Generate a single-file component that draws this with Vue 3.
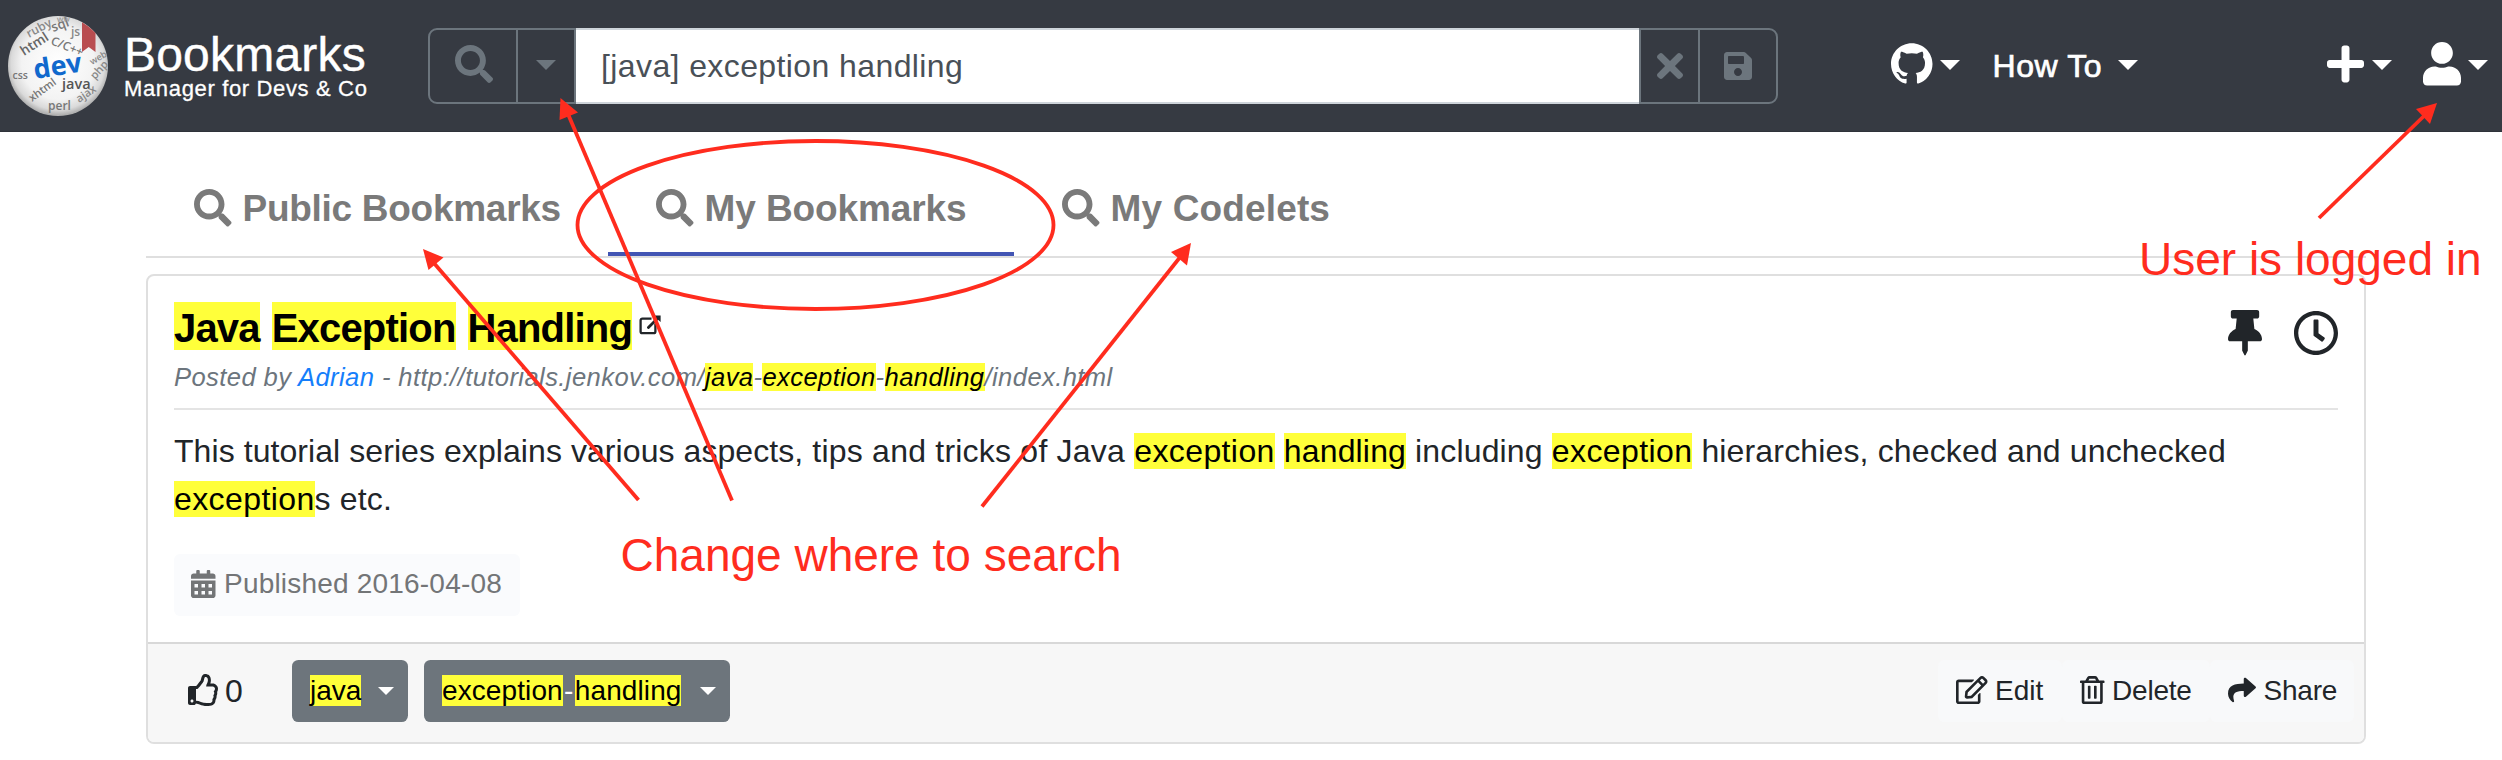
<script setup>
const icons = {
  search: {
    box: '0 0 512 512',
    d: 'M505 442.7L405.3 343c-4.5-4.5-10.6-7-17-7H372c27.6-35.3 44-79.7 44-128C416 93.1 322.9 0 208 0S0 93.1 0 208s93.1 208 208 208c48.3 0 92.7-16.4 128-44v16.3c0 6.4 2.5 12.5 7 17l99.7 99.7c9.4 9.4 24.6 9.4 33.9 0l28.3-28.3c9.4-9.4 9.4-24.6.1-34zM208 336c-70.7 0-128-57.2-128-128 0-70.7 57.2-128 128-128 70.7 0 128 57.2 128 128 0 70.7-57.2 128-128 128z'
  },
  times: {
    box: '0 80 352 352',
    d: 'M242.72 256l100.07-100.07c12.28-12.28 12.28-32.19 0-44.48l-22.24-22.24c-12.28-12.28-32.19-12.28-44.48 0L176 189.28 75.93 89.21c-12.28-12.28-32.19-12.28-44.48 0L9.21 111.45c-12.28 12.28-12.28 32.19 0 44.48L109.28 256 9.21 356.07c-12.28 12.28-12.28 32.19 0 44.48l22.24 22.24c12.28 12.28 32.2 12.28 44.48 0L176 322.72l100.07 100.07c12.28 12.28 32.2 12.28 44.48 0l22.24-22.24c12.28-12.28 12.28-32.19 0-44.48L242.72 256z'
  },
  save: {
    box: '0 32 448 448',
    d: 'M433.941 129.941l-83.882-83.882A48 48 0 0 0 316.118 32H48C21.49 32 0 53.49 0 80v352c0 26.51 21.49 48 48 48h352c26.51 0 48-21.49 48-48V163.882a48 48 0 0 0-14.059-33.941zM224 416c-35.346 0-64-28.654-64-64 0-35.346 28.654-64 64-64s64 28.654 64 64c0 35.346-28.654 64-64 64zm96-304.52V212c0 6.627-5.373 12-12 12H76c-6.627 0-12-5.373-12-12V108c0-6.627 5.373-12 12-12h228.52c3.183 0 6.235 1.264 8.485 3.515l3.48 3.48A11.996 11.996 0 0 1 320 111.48z'
  },
  github: {
    box: '0 0 16 15.7',
    d: 'M8 0C3.58 0 0 3.58 0 8c0 3.54 2.29 6.53 5.47 7.59.4.07.55-.17.55-.38 0-.19-.01-.82-.01-1.49-2.01.37-2.53-.49-2.69-.94-.09-.23-.48-.94-.82-1.13-.28-.15-.68-.52-.01-.53.63-.01 1.08.58 1.23.82.72 1.21 1.87.87 2.33.66.07-.52.28-.87.51-1.07-1.78-.2-3.64-.89-3.64-3.95 0-.87.31-1.59.82-2.15-.08-.2-.36-1.02.08-2.12 0 0 .67-.21 2.2.82.64-.18 1.32-.27 2-.27.68 0 1.36.09 2 .27 1.53-1.04 2.2-.82 2.2-.82.44 1.1.16 1.92.08 2.12.51.56.82 1.27.82 2.15 0 3.07-1.87 3.75-3.65 3.95.29.25.54.73.54 1.48 0 1.07-.01 1.93-.01 2.2 0 .21.15.46.55.38A8.013 8.013 0 0016 8c0-4.42-3.58-8-8-8z'
  },
  plus: {
    box: '0 32 448 448',
    d: 'M416 208H272V64c0-17.67-14.33-32-32-32h-32c-17.67 0-32 14.33-32 32v144H32c-17.67 0-32 14.33-32 32v32c0 17.67 14.33 32 32 32h144v144c0 17.67 14.33 32 32 32h32c17.67 0 32-14.33 32-32V304h144c17.67 0 32-14.33 32-32v-32c0-17.67-14.33-32-32-32z'
  },
  user: {
    box: '0 0 448 512',
    d: 'M224 256c70.7 0 128-57.3 128-128S294.7 0 224 0 96 57.3 96 128s57.3 128 128 128zm89.6 32h-16.7c-22.2 10.2-46.9 16-72.9 16s-50.6-5.8-72.9-16h-16.7C60.2 288 0 348.2 0 422.4V464c0 26.5 21.5 48 48 48h352c26.5 0 48-21.5 48-48v-41.6c0-74.2-60.2-134.4-134.4-134.4z'
  },
  pin: {
    box: '0 0 384 512',
    d: 'M298.028 214.267L285.793 96H328c13.255 0 24-10.745 24-24V24c0-13.255-10.745-24-24-24H56C42.745 0 32 10.745 32 24v48c0 13.255 10.745 24 24 24h42.207L85.972 214.267C37.465 236.82 0 277.261 0 328c0 13.255 10.745 24 24 24h136v104.007c0 1.242.289 2.467.845 3.578l24 48c2.941 5.882 11.364 5.893 14.311 0l24-48a8.008 8.008 0 0 0 .845-3.578V352h136c13.255 0 24-10.745 24-24-.001-51.183-37.983-91.42-85.973-113.733z'
  },
  clock: {
    box: '8 8 496 496',
    d: 'M256 8C119 8 8 119 8 256s111 248 248 248 248-111 248-248S393 8 256 8zm0 448c-110.5 0-200-89.5-200-200S145.5 56 256 56s200 89.5 200 200-89.5 200-200 200zm61.8-104.4l-84.9-61.7c-3.1-2.3-4.9-5.9-4.9-9.7V116c0-6.6 5.4-12 12-12h32c6.6 0 12 5.4 12 12v141.7l66.8 48.6c5.4 3.9 6.5 11.4 2.6 16.8L334.6 349c-3.9 5.3-11.4 6.5-16.8 2.6z'
  },
  thumb: {
    box: '0 0 480 512',
    d: 'M466.27 286.69C475.04 271.84 480 256 480 236.85c0-44.015-37.218-85.58-85.82-85.58H357.7c4.92-12.81 8.85-28.13 8.85-46.54C366.55 31.936 328.86 0 271.28 0c-61.607 0-58.093 94.933-71.76 108.6-22.747 22.747-49.615 66.447-68.76 83.4H32c-17.673 0-32 14.327-32 32v240c0 17.673 14.327 32 32 32h64c14.893 0 27.408-10.174 30.978-23.95 44.509 1.001 75.06 39.94 177.802 39.94 7.22 0 15.22.01 22.22.01 77.117 0 111.986-39.423 112.94-95.33 13.319-18.425 20.299-43.122 17.34-66.99 9.854-18.452 13.664-40.343 8.99-62.99zm-61.75 53.83c12.56 21.13 1.26 49.41-13.94 57.57 7.7 48.78-17.608 65.9-53.12 65.9h-37.82c-71.639 0-118.029-37.82-171.64-37.82V240h10.92c28.36 0 67.98-70.89 94.54-97.46 28.36-28.36 18.91-75.63 37.82-94.54 47.27 0 47.27 32.98 47.27 56.73 0 39.17-28.36 56.72-28.36 94.54h103.99c21.11 0 37.73 18.91 37.82 37.82.09 18.9-12.82 37.81-22.27 37.81 13.489 14.555 16.371 45.236-5.21 65.62zM88 432c0 13.255-10.745 24-24 24s-24-10.745-24-24 10.745-24 24-24 24 10.745 24 24z'
  },
  edit: {
    box: '0 0 576 512',
    d: 'M402.3 344.9l32-32c5-5 13.7-1.5 13.7 5.7V464c0 26.5-21.5 48-48 48H48c-26.5 0-48-21.5-48-48V112c0-26.5 21.5-48 48-48h273.5c7.1 0 10.7 8.6 5.7 13.7l-32 32c-1.5 1.5-3.5 2.3-5.7 2.3H48v352h352V350.5c0-2.1.8-4.1 2.3-5.6zm156.6-201.8L296.3 405.7l-90.4 10c-26.2 2.9-48.5-19.2-45.6-45.6l10-90.4L432.9 17.1c22.9-22.9 59.9-22.9 82.7 0l43.2 43.2c22.9 22.9 22.9 60 .1 82.8zM460.1 174L402 115.9 216.2 301.8l-7.3 65.3 65.3-7.3L460.1 174zm64.8-79.7l-43.2-43.2c-4.1-4.1-10.8-4.1-14.8 0L436 82l58.1 58.1 30.9-30.9c4-4.2 4-10.8-.1-14.9z'
  },
  trash: {
    box: '0 0 448 512',
    d: 'M268 416h24a12 12 0 0 0 12-12V188a12 12 0 0 0-12-12h-24a12 12 0 0 0-12 12v216a12 12 0 0 0 12 12zM432 80h-82.41l-34-56.7A48 48 0 0 0 274.41 0H173.59a48 48 0 0 0-41.16 23.3L98.41 80H16A16 16 0 0 0 0 96v16a16 16 0 0 0 16 16h16v336a48 48 0 0 0 48 48h288a48 48 0 0 0 48-48V128h16a16 16 0 0 0 16-16V96a16 16 0 0 0-16-16zM171.84 50.91A6 6 0 0 1 177 48h94a6 6 0 0 1 5.15 2.91L293.61 80H154.39zM368 464H80V128h288zm-212-48h24a12 12 0 0 0 12-12V188a12 12 0 0 0-12-12h-24a12 12 0 0 0-12 12v216a12 12 0 0 0 12 12z'
  },
  share: {
    box: '0 0 512 512',
    d: 'M503.691 189.836L327.687 37.851C312.281 24.546 288 35.347 288 56.015v80.053C127.371 137.907 0 170.1 0 322.326c0 61.441 39.581 122.309 83.333 154.132 13.653 9.931 33.111-2.533 28.077-18.631C66.066 312.814 132.917 274.316 288 272.085V360c0 20.7 24.3 31.453 39.687 18.164l176.004-152c11.071-9.562 11.086-26.753 0-36.328z'
  }
}

const tabs = [
  { label: 'Public Bookmarks', kind: 'public', active: false },
  { label: 'My Bookmarks', kind: 'mine', active: true },
  { label: 'My Codelets', kind: 'codelets', active: false }
]

/* words scattered over the logo sphere: x, y, rotation, size, shade */
const logoWords = [
  { t: 'ruby', x: 21, y: 22, r: -28, s: 12, c: '#888' },
  { t: 'sql', x: 45, y: 16, r: -20, s: 13, c: '#777' },
  { t: 'ww', x: 49, y: 6, r: -2, s: 8, c: '#999' },
  { t: 'js', x: 63, y: 20, r: 0, s: 12, c: '#888' },
  { t: 'html', x: 16, y: 40, r: -33, s: 13.5, c: '#666' },
  { t: 'C/C++', x: 42, y: 28, r: 22, s: 12, c: '#777' },
  { t: 'css', x: 4.5, y: 63, r: 0, s: 10.5, c: '#777' },
  { t: 'web', x: 84, y: 49, r: -30, s: 9, c: '#888' },
  { t: 'php', x: 87, y: 64, r: -48, s: 11, c: '#888' },
  { t: 'java', x: 54, y: 73, r: 0, s: 14.5, c: '#555' },
  { t: 'xhtml', x: 24, y: 86, r: -36, s: 11, c: '#777' },
  { t: 'perl', x: 40, y: 94, r: 0, s: 12, c: '#777' },
  { t: 'ajax', x: 71, y: 87, r: -34, s: 11, c: '#888' }
]

const arrows = [
  { x1: 638.5, y1: 500, x2: 433, y2: 262, head: '423,249 443.5,257.5 428.5,270' },
  { x1: 732, y1: 500.5, x2: 568, y2: 114, head: '560.5,98 578,112.5 559.5,120' },
  { x1: 982, y1: 506.5, x2: 1181, y2: 256, head: '1191,243 1187,265.5 1171,252' },
  { x1: 2319, y1: 218, x2: 2425, y2: 115, head: '2437,103 2430,124 2416,109' }
]
</script>

<template>
  <div class="page">
    <header class="navbar">
      <a class="brand">
        <svg class="logo" viewBox="0 0 100 100">
          <defs>
            <radialGradient id="ball" cx="50%" cy="47%" r="52%">
              <stop offset="0" stop-color="#fff" />
              <stop offset="0.7" stop-color="#f3f3f3" />
              <stop offset="0.9" stop-color="#dadada" />
              <stop offset="1" stop-color="#b0b0b0" />
            </radialGradient>
          </defs>
          <circle cx="50" cy="50" r="50" fill="url(#ball)" />
          <text
            v-for="w in logoWords"
            :key="w.t"
            :transform="`translate(${w.x} ${w.y}) rotate(${w.r})`"
            :font-size="w.s"
            :fill="w.c"
            class="word"
          >{{ w.t }}</text>
          <path d="M74 6.200q7 3.900 13.500 10.800v19l-6.800-5-6.700 5z" fill="#b94d50" />
          <text transform="translate(27 63) rotate(-9)" class="dev">dev</text>
        </svg>
        <span class="brand-text">
          <span class="brand-name">Bookmarks</span>
          <span class="brand-sub">Manager for Devs &amp; Co</span>
        </span>
      </a>

      <div class="search">
        <button class="seg seg-search">
          <svg :viewBox="icons.search.box"><path :d="icons.search.d" /></svg>
        </button>
        <button class="seg seg-drop"><i class="caret"></i></button>
        <div class="field">[java] exception handling</div>
        <button class="seg seg-clear">
          <svg :viewBox="icons.times.box"><path :d="icons.times.d" /></svg>
        </button>
        <button class="seg seg-save">
          <svg :viewBox="icons.save.box"><path :d="icons.save.d" /></svg>
        </button>
      </div>

      <nav class="links">
        <a class="link gh"><svg :viewBox="icons.github.box"><path :d="icons.github.d" /></svg><i class="caret"></i></a>
        <a class="link howto"><span>How To</span><i class="caret"></i></a>
        <a class="link add"><svg :viewBox="icons.plus.box"><path :d="icons.plus.d" /></svg><i class="caret"></i></a>
        <a class="link user"><svg :viewBox="icons.user.box"><path :d="icons.user.d" /></svg><i class="caret"></i></a>
      </nav>
    </header>

    <main class="content">
      <div class="tabs">
        <div v-for="tab in tabs" :key="tab.label" class="tab" :class="[tab.kind, { active: tab.active }]">
          <svg :viewBox="icons.search.box"><path :d="icons.search.d" /></svg>
          <span>{{ tab.label }}</span>
        </div>
      </div>

      <article class="card">
        <div class="card-body">
          <div class="head">
            <h2 class="title">
              <mark>Java</mark> <mark>Exception</mark> <mark>Handling</mark><svg class="ext" viewBox="0 0 22 20">
                <path d="M12.5 3.6H3.4a1.8 1.8 0 0 0-1.8 1.8v11a1.8 1.8 0 0 0 1.8 1.8h11.2a1.8 1.8 0 0 0 1.8-1.8V8.5" fill="none" stroke="#212529" stroke-width="2.3" />
                <path d="M9.4 12.6L18.5 3.4" fill="none" stroke="#212529" stroke-width="2.8" stroke-linecap="round" />
                <path d="M14 .6h7.6v6.4z" fill="#212529" />
              </svg>
            </h2>
            <div class="head-icons">
              <svg class="pin" :viewBox="icons.pin.box"><path :d="icons.pin.d" /></svg>
              <svg class="clock" :viewBox="icons.clock.box"><path :d="icons.clock.d" /></svg>
            </div>
          </div>
          <p class="meta">Posted by <a>Adrian</a> - http://tutorials.jenkov.com/<mark>java</mark>-<mark>exception</mark>-<mark>handling</mark>/index.html</p>
          <div class="rule"></div>
          <p class="desc"><span class="tight">This tutorial series explains various aspects,</span> <span class="loose">tips and tricks of Java </span><mark class="wide">exception</mark> <mark>handling</mark> including <mark class="wide">exception</mark> hierarchies, checked and unchecked<br><mark class="wide">exception</mark>s etc.</p>
          <div class="badge">
            <svg viewBox="0 0 448 512">
              <path d="M400 64h-48V16c0-8.800-7.200-16-16-16h-32c-8.800 0-16 7.200-16 16v48H160V16c0-8.800-7.200-16-16-16h-32c-8.800 0-16 7.200-16 16v48H48C21.500 64 0 85.500 0 112v48h448v-48c0-26.500-21.500-48-48-48z" />
              <path fill-rule="evenodd" d="M0 192h448v272c0 26.500-21.500 48-48 48H48c-26.500 0-48-21.500-48-48zM64 256v64h64v-64zM192 256v64h64v-64zM320 256v64h64v-64zM64 384v64h64v-64zM192 384v64h64v-64zM320 384v64h64v-64z" />
            </svg>
            <span>Published 2016-04-08</span>
          </div>
        </div>

        <footer class="card-footer">
          <div class="like">
            <svg :viewBox="icons.thumb.box"><path :d="icons.thumb.d" /></svg>
            <span>0</span>
          </div>
          <button class="tag tag-java"><span><mark>java</mark></span><i class="caret"></i></button>
          <button class="tag tag-eh"><span><mark>exception</mark><b>-</b><mark>handling</mark></span><i class="caret"></i></button>
          <div class="actions">
            <button class="act edit"><svg :viewBox="icons.edit.box"><path :d="icons.edit.d" /></svg><span>Edit</span></button>
            <button class="act delete"><svg :viewBox="icons.trash.box"><path :d="icons.trash.d" /></svg><span>Delete</span></button>
            <button class="act share"><svg :viewBox="icons.share.box"><path :d="icons.share.d" /></svg><span>Share</span></button>
          </div>
        </footer>
      </article>
    </main>

    <svg class="notes" viewBox="0 0 2502 760">
      <ellipse cx="815.5" cy="225" rx="238" ry="84" />
      <g v-for="a in arrows" :key="a.head">
        <line :x1="a.x1" :y1="a.y1" :x2="a.x2" :y2="a.y2" />
        <polygon :points="a.head" />
      </g>
      <text x="620.5" y="571">Change where to search</text>
      <text x="2139" y="275">User is logged in</text>
    </svg>
  </div>
</template>

<style>
body {
  background: #fff;
  overflow: hidden;
}
</style>

<style scoped>
.page {
  position: relative;
  width: 2502px;
  height: 760px;
  overflow: hidden;
  background: #fff;
  color: #212529;
  font-family: "Liberation Sans", Arial, sans-serif;
}
svg {
  display: block;
  flex: none;
  fill: currentColor;
}
button {
  margin: 0;
  border: 0;
  padding: 0;
  background: none;
  font: inherit;
  color: inherit;
  text-align: left;
}
mark {
  background: #ffff3a;
  color: #000;
}
.caret {
  flex: none;
  width: 0;
  height: 0;
  border: 10px solid transparent;
  border-top-color: currentColor;
  border-bottom: 0;
}

.navbar {
  box-sizing: border-box;
  display: flex;
  height: 132px;
  background: #363a42;
  border-bottom: 1px solid #2f323a;
  color: #fff;
}
.brand {
  display: flex;
  flex: none;
  box-sizing: border-box;
  width: 428px;
  padding: 16px 0 0 8px;
}
.logo {
  width: 100px;
  height: 100px;
  overflow: visible;
}
.word {
  font-family: "Open Sans", sans-serif;
  font-weight: 600;
}
.dev {
  font: bold 27px "Open Sans", sans-serif;
  fill: #1169cd;
}
.brand-text {
  display: flex;
  flex-direction: column;
  padding: 16px 0 0 16px;
  white-space: nowrap;
}
.brand-name {
  font-size: 48px;
  line-height: 46px;
  letter-spacing: 0.2px;
  -webkit-text-stroke: 0.4px #fff;
}
.brand-sub {
  font-size: 22px;
  line-height: 22px;
  letter-spacing: 0.65px;
  -webkit-text-stroke: 0.3px #fff;
}

.search {
  display: flex;
  flex: none;
  box-sizing: border-box;
  width: 1350px;
  height: 76px;
  margin-top: 28px;
  border: 2px solid #6c757d;
  border-radius: 9px;
  color: #6c757d;
}
.seg {
  display: flex;
  align-items: center;
  justify-content: center;
}
.seg-search {
  width: 86px;
}
.seg-search svg {
  width: 38px;
  height: 38px;
  margin: 0 0 4px 1px;
}
.seg-drop {
  box-sizing: border-box;
  width: 60px;
  border-left: 2px solid #6c757d;
  border-right: 2px solid #6c757d;
}
.seg-drop .caret {
  margin-bottom: 2px;
}
.field {
  box-sizing: border-box;
  width: 1063px;
  height: 76px;
  margin-top: -2px;
  padding-left: 25px;
  border-top: 2px solid #ced4da;
  border-bottom: 2px solid #ced4da;
  background: #fff;
  color: #495057;
  font-size: 32px;
  line-height: 73px;
  letter-spacing: 0.4px;
}
.seg-clear {
  box-sizing: border-box;
  width: 61px;
  border-left: 2px solid #6c757d;
  border-right: 2px solid #6c757d;
}
.seg-clear svg {
  width: 26px;
  height: 26px;
}
.seg-save {
  flex: 1;
}
.seg-save svg {
  width: 28px;
  height: 28px;
}

.links {
  display: flex;
  align-items: center;
  height: 132px;
  padding-left: 113px;
}
.link {
  display: flex;
  flex: none;
  align-items: center;
}
.link .caret {
  margin-bottom: 2px;
}
.gh svg {
  width: 41.5px;
  height: 41px;
  margin: 0 7.5px 5px 0;
}
.howto {
  box-sizing: border-box;
  width: 365px;
  padding-left: 32.5px;
  font-size: 32px;
  -webkit-text-stroke: 0.7px #fff;
}
.howto span {
  width: 125.5px;
  line-height: 36px;
  letter-spacing: 0.6px;
}
.add svg {
  width: 37px;
  height: 38px;
  margin: 0 8px 4px 2px;
}
.user svg {
  width: 38px;
  height: 43.5px;
  margin: 0 7px 4px 31px;
}

.content {
  width: 2220px;
  margin-left: 146px;
}
.tabs {
  display: flex;
  height: 124px;
  border-bottom: 2px solid #dfdfdf;
}
.tab {
  box-sizing: border-box;
  display: flex;
  flex: none;
  width: 406px;
  height: 124px;
  padding: 57px 0 0 48px;
  color: #7a7a7a;
}
.tab.public {
  width: 462px;
}
.tab.active {
  border-bottom: 4px solid #4255b4;
}
.tab svg {
  width: 37.5px;
  height: 37.5px;
}
.tab span {
  margin: 1px 0 0 11px;
  font-size: 37px;
  font-weight: bold;
  line-height: 37px;
  letter-spacing: -0.28px;
  white-space: nowrap;
}
.tab.mine span {
  letter-spacing: -0.1px;
}
.tab.codelets span {
  letter-spacing: 0.15px;
}

.card {
  box-sizing: border-box;
  height: 470px;
  margin-top: 16px;
  border: 2px solid #dfdfdf;
  border-radius: 8px;
  overflow: hidden;
}
.card-body {
  box-sizing: border-box;
  height: 366px;
  padding: 28px 26px 0;
}
.head {
  display: flex;
  justify-content: space-between;
  height: 48px;
}
.title {
  display: flex;
  gap: 12px;
  margin: 0;
  font-size: 40px;
  letter-spacing: -0.82px;
}
.title mark {
  height: 48px;
  margin-top: -2px;
  line-height: 52px;
}
.ext {
  width: 22px;
  height: 20px;
  margin: 11px 0 0 -5px;
}
.head-icons {
  display: flex;
  gap: 32px;
  padding-top: 6px;
}
.pin {
  width: 34px;
  height: 45.5px;
}
.clock {
  width: 44px;
  height: 44px;
  margin-top: 1px;
}
.meta {
  margin: 6px 0 0;
  color: #6c757d;
  font-size: 25.6px;
  font-style: italic;
  line-height: 38px;
  letter-spacing: 0.4px;
  white-space: nowrap;
}
.meta a {
  color: #157efb;
}
.rule {
  height: 2px;
  margin-top: 12px;
  background: #e4e4e4;
}
.desc {
  margin: 17px 0 0;
  font-size: 32px;
  line-height: 48px;
  letter-spacing: 0.15px;
  white-space: nowrap;
}
.tight {
  letter-spacing: 0.07px;
}
.loose {
  letter-spacing: 0.22px;
}
.wide {
  letter-spacing: 0.4px;
}
.badge {
  box-sizing: border-box;
  display: flex;
  align-items: center;
  width: 346px;
  height: 62px;
  margin-top: 31px;
  padding: 0 0 3px 17px;
  border-radius: 6px;
  background: #fafbfd;
  color: #737577;
  font-size: 28px;
  letter-spacing: 0.2px;
  white-space: nowrap;
}
.badge svg {
  width: 24.5px;
  height: 28px;
  margin-right: 8.5px;
}

.card-footer {
  box-sizing: border-box;
  display: flex;
  height: 100px;
  padding: 16px 10px 0 40px;
  border-top: 2px solid #d8d8d8;
  background: #f7f7f7;
  font-size: 28px;
  line-height: 62px;
}
.like {
  display: flex;
  align-items: center;
  width: 104px;
  height: 62px;
  font-size: 32px;
}
.like svg {
  width: 30px;
  height: 32px;
  margin: 0 7px 2px 0;
}
.tag {
  box-sizing: border-box;
  display: flex;
  align-items: center;
  height: 62px;
  border-radius: 6.4px;
  background: #6d757c;
  color: #fff;
  white-space: nowrap;
}
.tag span {
  flex: none;
  height: 62px;
  margin-top: -1px;
}
.tag b {
  margin: 0 1.3px;
  font-weight: normal;
}
.tag .caret {
  border-width: 8.5px 8px 0;
}
.tag-java {
  width: 116px;
  padding-left: 18px;
}
.tag-java span {
  width: 68px;
}
.tag-eh {
  width: 306px;
  margin-left: 16px;
  padding-left: 18px;
}
.tag-eh span {
  width: 258px;
  letter-spacing: 0.1px;
}
.actions {
  display: flex;
  height: 62px;
  margin-left: auto;
}
.act {
  box-sizing: border-box;
  display: flex;
  align-items: center;
  height: 62px;
  padding-left: 18px;
  border-radius: 6.4px;
  background: #f8f9fa;
}
.act span {
  margin-top: -1px;
}
.act svg {
  height: 28px;
  margin-bottom: 3px;
}
.edit {
  width: 124px;
}
.edit svg {
  width: 31.5px;
  margin-right: 7.5px;
}
.delete {
  width: 148px;
}
.delete svg {
  width: 24.5px;
  margin-right: 7.5px;
}
.delete span {
  letter-spacing: -0.2px;
}
.share {
  width: 144px;
}
.share svg {
  width: 28px;
  margin-right: 7.5px;
}
.share span {
  letter-spacing: -0.2px;
}

.notes {
  position: absolute;
  left: 0;
  top: 0;
  width: 2502px;
  height: 760px;
  pointer-events: none;
}
.notes ellipse,
.notes line {
  fill: none;
  stroke: #ff2c1e;
  stroke-width: 3.8px;
}
.notes polygon,
.notes text {
  fill: #ff2c1e;
}
.notes text {
  font-size: 46px;
}
</style>
